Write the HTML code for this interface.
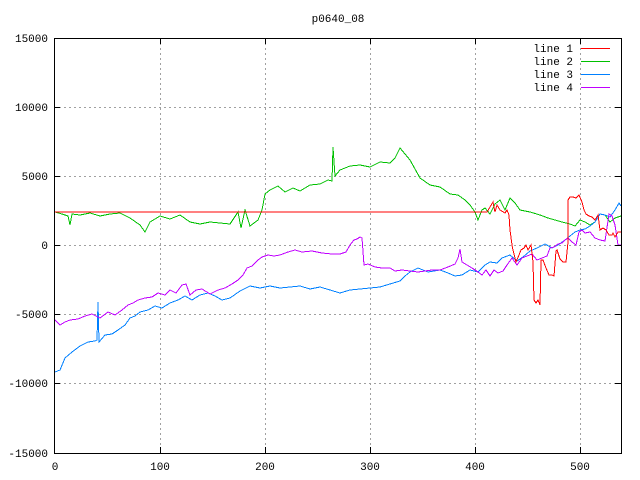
<!DOCTYPE html>
<html><head><style>body{margin:0;background:#fff}svg{display:block}text{font-family:"Liberation Mono","DejaVu Sans Mono",monospace;font-size:11px;fill:#000}</style></head><body>
<svg width="640" height="480" xmlns="http://www.w3.org/2000/svg" shape-rendering="crispEdges">
<rect width="640" height="480" fill="#fff"/>
<g stroke="#a0a0a0" stroke-dasharray="2,3" stroke-width="1">
<line x1="160.5" y1="38" x2="160.5" y2="453"/><line x1="265.5" y1="38" x2="265.5" y2="453"/><line x1="370.5" y1="38" x2="370.5" y2="453"/><line x1="475.5" y1="38" x2="475.5" y2="453"/><line x1="580.5" y1="38" x2="580.5" y2="453"/>
<line x1="54" y1="107.5" x2="621" y2="107.5"/><line x1="54" y1="176.5" x2="621" y2="176.5"/><line x1="54" y1="245.5" x2="621" y2="245.5"/><line x1="54" y1="314.5" x2="621" y2="314.5"/><line x1="54" y1="383.5" x2="621" y2="383.5"/>
</g>
<g fill="none" stroke-width="1">
<polyline stroke="#00c000" points="55,212 62,214 68,216 70,225 72,214 80,215 90,213 100,216 110,214 120,213 130,218 140,225 145,232 150,222 160,216 170,219 180,215 190,222 200,224 210,222 220,223 230,224 238,212 241,228 245,210 250,226 258,220 262,210 265,194 270,190 278,186 285,192 293,188 300,191 310,185 320,184 328,180 332,181 333,147 335,176 340,170 350,166 360,165 370,167 380,162 390,163 395,158 400,148 405,154 410,160 420,178 430,185 440,187 450,194 458,195 465,200 470,205 475,212 478,220 482,210 485,208 490,214 495,204 500,200 505,210 510,198 515,203 520,210 530,212 540,215 548,218 555,220 562,222 570,224 575,226 580,220 585,222 590,225 595,222 600,214 605,215 610,222 615,218 621,216"/>
<polyline stroke="#0080ff" points="55,372 60,370 65,358 72,352 80,346 88,342 95,341 97,340 98,302 99,342 105,335 112,334 118,330 125,325 130,318 135,316 140,312 148,310 155,306 162,308 170,303 178,300 185,296 192,300 200,295 208,293 215,296 222,300 230,298 240,291 250,286 260,288 270,286 280,288 290,287 300,286 310,289 320,287 330,290 340,293 350,290 360,289 370,288 380,287 390,284 400,281 405,276 410,272 418,268 428,272 440,270 448,273 455,276 462,275 470,270 478,272 485,265 490,262 497,263 502,258 510,255 517,261 523,257 530,251 537,248 545,244 552,248 558,245 565,240 570,236 575,232 580,230 585,229 590,226 595,222 600,214 605,215 610,217 615,210 619,203 621,206"/>
<polyline stroke="#c000ff" points="55,320 60,325 65,322 70,320 78,319 85,316 92,314 100,318 108,312 115,315 122,310 128,305 133,303 138,300 145,298 152,297 158,293 165,295 170,290 176,293 182,285 186,284 190,295 196,290 202,289 210,294 218,290 225,288 232,284 238,280 243,275 247,268 252,266 258,260 262,257 268,255 274,256 280,255 288,252 295,250 302,252 312,251 322,253 332,254 340,254 346,252 350,245 354,240 357,239 360,237 362,238 364,265 368,264 375,267 382,268 390,268 395,271 402,270 410,271 418,272 425,271 432,270 440,270 448,267 455,264 458,258 460,249 462,262 467,265 472,268 478,272 482,275 486,270 490,276 494,270 498,273 503,271 507,265 512,258 517,265 522,258 527,256 532,254 537,260 542,258 547,256 550,248 554,247 558,244 562,243 565,240 568,238 572,242 576,245 579,232 582,230 585,233 590,232 595,238 600,240 605,241 609,214 612,216 615,225 618,245 621,245"/>
<polyline stroke="#ff0000" points="55,212 487,212 490,207 493,202 495,212 497,205 500,210 505,213 507,210 509,215 510,230 512,245 513,250 516,262 519,255 521,250 524,248 526,245 528,250 531,245 533,262 534,300 536,303 538,300 540,305 541,260 543,260 546,268 549,275 552,275 554,276 556,251 557,250 560,259 563,262 566,262 568,242 568,200 570,197 573,197 576,198 579,195 582,202 584,210 586,214 589,216 592,217 595,220 598,215 600,230 603,228 606,230 609,235 612,235 613,233 615,237 618,232 621,232"/>
<line x1="581" y1="48.5" x2="610" y2="48.5" stroke="#ff0000"/>
<line x1="581" y1="61.5" x2="610" y2="61.5" stroke="#00c000"/>
<line x1="581" y1="74.5" x2="610" y2="74.5" stroke="#0080ff"/>
<line x1="581" y1="87.5" x2="610" y2="87.5" stroke="#c000ff"/>
</g>
<rect x="54.5" y="38.5" width="567" height="415" fill="none" stroke="#000"/>
<g stroke="#000">
<line x1="160.5" y1="38" x2="160.5" y2="44"/><line x1="265.5" y1="38" x2="265.5" y2="44"/><line x1="370.5" y1="38" x2="370.5" y2="44"/><line x1="475.5" y1="38" x2="475.5" y2="44"/><line x1="580.5" y1="38" x2="580.5" y2="44"/>
<line x1="160.5" y1="447" x2="160.5" y2="453"/><line x1="265.5" y1="447" x2="265.5" y2="453"/><line x1="370.5" y1="447" x2="370.5" y2="453"/><line x1="475.5" y1="447" x2="475.5" y2="453"/><line x1="580.5" y1="447" x2="580.5" y2="453"/>
<line x1="54" y1="107.5" x2="60" y2="107.5"/><line x1="54" y1="176.5" x2="60" y2="176.5"/><line x1="54" y1="245.5" x2="60" y2="245.5"/><line x1="54" y1="314.5" x2="60" y2="314.5"/><line x1="54" y1="383.5" x2="60" y2="383.5"/>
<line x1="615" y1="107.5" x2="621" y2="107.5"/><line x1="615" y1="176.5" x2="621" y2="176.5"/><line x1="615" y1="245.5" x2="621" y2="245.5"/><line x1="615" y1="314.5" x2="621" y2="314.5"/><line x1="615" y1="383.5" x2="621" y2="383.5"/>
</g>
<g text-anchor="end">
<text x="48" y="42">15000</text><text x="48" y="111">10000</text><text x="48" y="180">5000</text><text x="48" y="249">0</text><text x="48" y="318">-5000</text><text x="48" y="387">-10000</text><text x="48" y="457">-15000</text>
<text x="573" y="52">line 1</text><text x="573" y="65">line 2</text><text x="573" y="78">line 3</text><text x="573" y="91">line 4</text>
</g>
<g text-anchor="middle">
<text x="55" y="470">0</text><text x="160" y="470">100</text><text x="265" y="470">200</text><text x="370" y="470">300</text><text x="475" y="470">400</text><text x="580" y="470">500</text>
<text x="338" y="22">p0640_08</text>
</g>
</svg>
</body></html>
